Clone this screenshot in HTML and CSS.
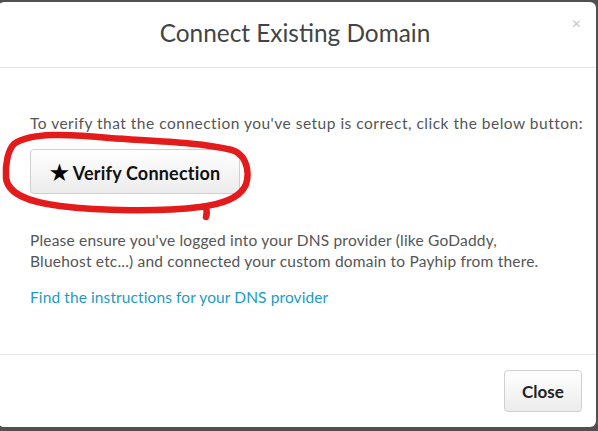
FILE: index.html
```html
<!DOCTYPE html>
<html>
<head>
<meta charset="utf-8">
<link rel="stylesheet" href="styles.css">
</head>
<body>
<div class="modal">
  <div class="modal-header">
    <h2 class="title">Connect Existing Domain</h2>
    <span class="close-x">×</span>
  </div>
  <div class="modal-body">
    <p class="lead">To verify that the connection you've setup is correct, click the below button:</p>
    <button class="btn btn-verify"><span class="star">★</span> Verify Connection</button>
    <p class="info">Please ensure you've logged into your DNS provider (like GoDaddy, Bluehost etc...) and connected your custom domain to Payhip from there.</p>
    <a class="link" href="#">Find the instructions for your DNS provider</a>
  </div>
  <div class="modal-footer">
    <button class="btn btn-close">Close</button>
  </div>
  <svg class="scribble" width="260" height="230" viewBox="0 0 260 230">
    <path d="M14 144 C 30 132, 70 134, 110 138 C 150 141, 200 142, 232 150 C 250 156, 250 180, 244 188 C 238 198, 222 204, 200 207 C 160 212, 100 211, 60 206 C 28 202, 8 194, 6 178 C 5 164, 8 150, 14 144 M 206 207 C 207 211, 207 214, 206 217" fill="none" stroke="#e31b1b" stroke-width="6.5" stroke-linecap="round" stroke-linejoin="round"/>
  </svg>
</div>
</body>
</html>
```

FILE: styles.css
```css
html, body {
  margin: 0;
  padding: 0;
  background: #505050;
  width: 598px;
  height: 431px;
  overflow: hidden;
}
body {
  font-family: Lato, "Open Sans", "Liberation Sans", sans-serif;
}
.modal {
  position: relative;
  margin: 2px 0 0 -2px;
  width: 598px;
  height: 425px;
  background: #fff;
  border-radius: 6px;
  display: flex;
  flex-direction: column;
}
.modal-header {
  position: relative;
  height: 66px;
  border-bottom: 1px solid #e5e5e5;
  display: flex;
  align-items: center;
  justify-content: center;
  box-sizing: border-box;
  padding-bottom: 4px;
}
.title {
  margin: 0;
  font-weight: 400;
  font-size: 24.4px;
  color: #444;
  padding-right: 4px;
}
.close-x {
  position: absolute;
  right: 15px;
  top: 11px;
  font-size: 16px;
  color: #c4c4c4;
}
.modal-body {
  flex: 1;
  padding: 45px 0 0 32px;
  border-bottom: 1px solid #e5e5e5;
}
.lead, .info {
  margin: 0;
  font-size: 15.5px;
  letter-spacing: 0.2px;
  line-height: 21px;
  color: #555;
}
.lead {
  letter-spacing: 0.5px;
  white-space: nowrap;
}
.btn {
  font-family: inherit;
  background: linear-gradient(#fff, #ececec);
  border: 1px solid #cfcfcf;
  border-radius: 4px;
  color: #222;
  font-weight: 700;
  cursor: pointer;
}
.btn-verify {
  margin-top: 15px;
  width: 210px;
  height: 45px;
  font-size: 18px;
  letter-spacing: 0.2px;
  display: block;
  color: #111;
}
.star {
  font-size: 21px;
  color: #000;
}
.info {
  margin-top: 36px;
  width: 530px;
}
.link {
  display: inline-block;
  margin-top: 16px;
  font-size: 15.5px;
  letter-spacing: 0.1px;
  color: #1d9bc4;
  text-decoration: none;
}
.modal-footer {
  height: 72px;
  display: flex;
  justify-content: flex-end;
  align-items: flex-start;
  padding: 15px 14px 0 0;
  box-sizing: border-box;
}
.btn-close {
  width: 78px;
  height: 42px;
  font-size: 17px;
}
.scribble {
  position: absolute;
  left: 2px;
  top: -2px;
}
```
